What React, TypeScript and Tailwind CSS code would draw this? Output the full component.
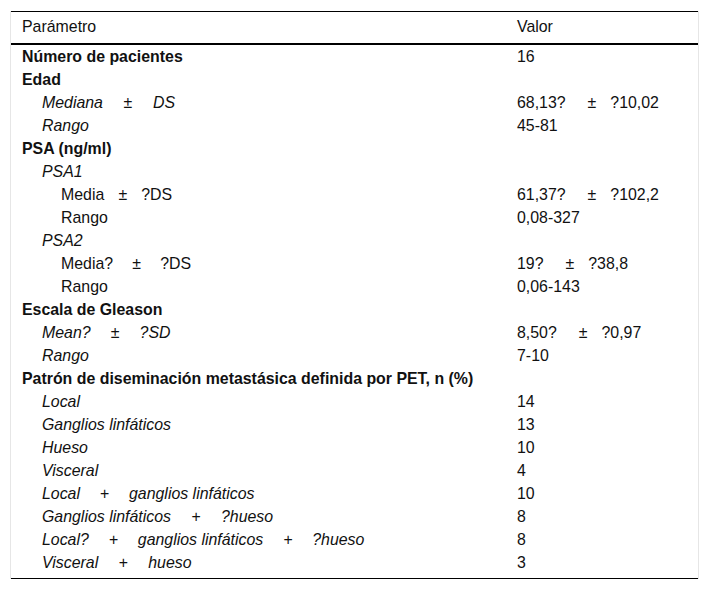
type Row = {
  label: string[]
  value: string[]
  level: 0 | 1 | 2
  sep?: string
  bold?: boolean
  italic?: boolean
}

// separators inside labels ("±", "+") keep the wide gaps of the source table
const rows: Row[] = [
  { label: ["Número de pacientes"], value: ["16"], level: 0, bold: true },
  { label: ["Edad"], value: [], level: 0, bold: true },
  { label: ["Mediana", "±", "DS"], sep: "w-[50px]", value: ["68,13?", "?10,02"], level: 1, italic: true },
  { label: ["Rango"], value: ["45-81"], level: 1, italic: true },
  { label: ["PSA (ng/ml)"], value: [], level: 0, bold: true },
  { label: ["PSA1"], value: [], level: 1, italic: true },
  { label: ["Media", "±", "?DS"], sep: "w-[37px]", value: ["61,37?", "?102,2"], level: 2 },
  { label: ["Rango"], value: ["0,08-327"], level: 2 },
  { label: ["PSA2"], value: [], level: 1, italic: true },
  { label: ["Media?", "±", "?DS"], sep: "w-[47px]", value: ["19?", "?38,8"], level: 2 },
  { label: ["Rango"], value: ["0,06-143"], level: 2 },
  { label: ["Escala de Gleason"], value: [], level: 0, bold: true },
  { label: ["Mean?", "±", "?SD"], sep: "w-[49px]", value: ["8,50?", "?0,97"], level: 1, italic: true },
  { label: ["Rango"], value: ["7-10"], level: 1, italic: true },
  { label: ["Patrón de diseminación metastásica definida por PET, n (%)"], value: [], level: 0, bold: true },
  { label: ["Local"], value: ["14"], level: 1, italic: true },
  { label: ["Ganglios linfáticos"], value: ["13"], level: 1, italic: true },
  { label: ["Hueso"], value: ["10"], level: 1, italic: true },
  { label: ["Visceral"], value: ["4"], level: 1, italic: true },
  { label: ["Local", "+", "ganglios linfáticos"], sep: "w-[49px]", value: ["10"], level: 1, italic: true },
  { label: ["Ganglios linfáticos", "+", "?hueso"], sep: "w-[50px]", value: ["8"], level: 1, italic: true },
  { label: ["Local?", "+", "ganglios linfáticos", "+", "?hueso"], sep: "w-[49px]", value: ["8"], level: 1, italic: true },
  { label: ["Visceral", "+", "hueso"], sep: "w-[50px]", value: ["3"], level: 1, italic: true },
]

const indent = ["pl-[11px]", "pl-[31px]", "pl-[50px]"]

export default function App() {
  return (
    <div className="bg-white min-h-[591px] pt-[11px] pl-[10px] font-['Liberation_Sans',Arial,sans-serif] text-[15.9px] text-[#111]">
      <div className="w-[689px] border-x border-[#e6e6e6]">
        <table className="w-full table-fixed border-collapse">
          <colgroup>
            <col className="w-[494px]" />
            <col />
          </colgroup>
          <thead>
            <tr className="h-[32px] border-t border-b-2 border-black">
              <th className="pl-[11px] text-left font-normal align-middle">Parámetro</th>
              <th className="pl-[12px] text-left font-normal align-middle">Valor</th>
            </tr>
          </thead>
          <tbody>
            {rows.map((r, i) => (
              <tr key={i} className="h-[23px]">
                <td
                  className={`${indent[r.level]} whitespace-nowrap align-middle leading-[23px] ${
                    r.bold ? "font-bold" : ""
                  } ${r.italic ? "italic" : ""}`}
                >
                  {r.label.map((part, j) =>
                    j % 2 === 1 ? (
                      <span key={j} className={`inline-block text-center ${r.sep}`}>
                        {part}
                      </span>
                    ) : (
                      <span key={j}>{part}</span>
                    )
                  )}
                </td>
                <td className="pl-[12px] whitespace-nowrap align-middle leading-[23px]">
                  {r.value.length === 2 ? (
                    <>
                      {r.value[0]}
                      <span className="inline-block pl-[22px] pr-[14px]">±</span>
                      {r.value[1]}
                    </>
                  ) : (
                    r.value[0]
                  )}
                </td>
              </tr>
            ))}
            <tr className="h-[5px] border-b border-black">
              <td />
              <td />
            </tr>
          </tbody>
        </table>
      </div>
    </div>
  )
}
